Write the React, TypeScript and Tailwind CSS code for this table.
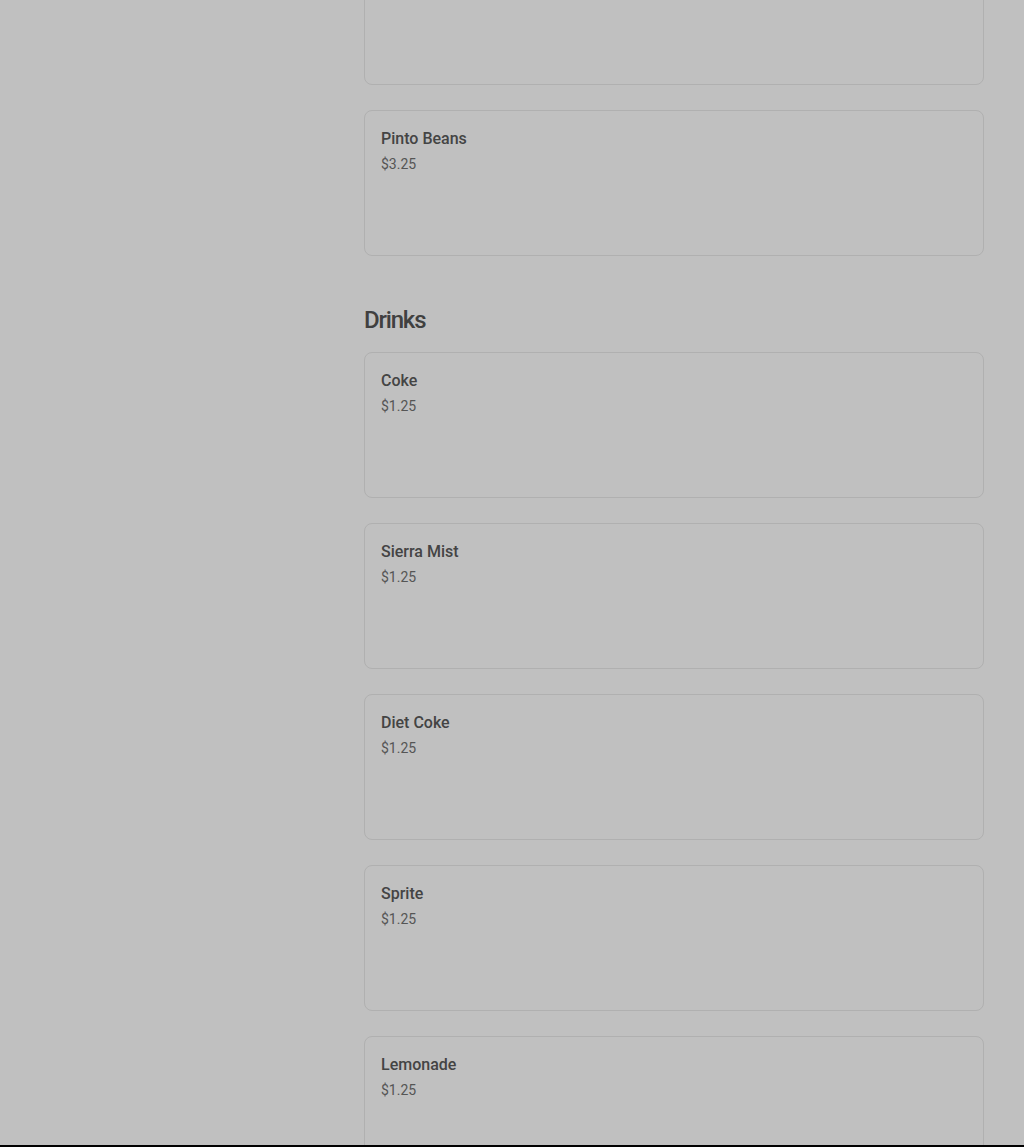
import React from 'react'

type Item = { name: string; price: string }

const sides: Item[] = [
  { name: 'Refried Beans', price: '$3.25' },
  { name: 'Pinto Beans', price: '$3.25' },
]

const drinks: Item[] = [
  { name: 'Coke', price: '$1.25' },
  { name: 'Sierra Mist', price: '$1.25' },
  { name: 'Diet Coke', price: '$1.25' },
  { name: 'Sprite', price: '$1.25' },
  { name: 'Lemonade', price: '$1.25' },
]

function ItemCard({ item }: { item: Item }) {
  return (
    <div className="h-[146px] rounded-lg border border-[#b0b0b0] px-4 pt-[16px]">
      <div className="text-base leading-6 font-medium text-[#444]">{item.name}</div>
      <div className="mt-[3px] text-sm leading-5 text-[#555]">{item.price}</div>
    </div>
  )
}

export default function App() {
  return (
    <div
      className="relative h-[1147px] overflow-hidden bg-[#c0c0c0]"
      style={{ fontFamily: 'Roboto, "Noto Sans", sans-serif' }}
    >
      <div className="flex">
        <div className="w-[364px] shrink-0" />
        <main className="w-[620px] mt-[-61px]">
          <div className="flex flex-col gap-[25px]">
            {sides.map((s) => (
              <ItemCard key={s.name} item={s} />
            ))}
          </div>

          <h2 className="mt-12 mb-4 text-2xl leading-8 font-medium tracking-[-0.05em] text-[#404040]">
            Drinks
          </h2>
          <div className="flex flex-col gap-[25px]">
            {drinks.map((d) => (
              <ItemCard key={d.name} item={d} />
            ))}
          </div>
        </main>
      </div>
      <div className="absolute bottom-0 left-0 right-0 h-[2px] bg-black" />
    </div>
  )
}
